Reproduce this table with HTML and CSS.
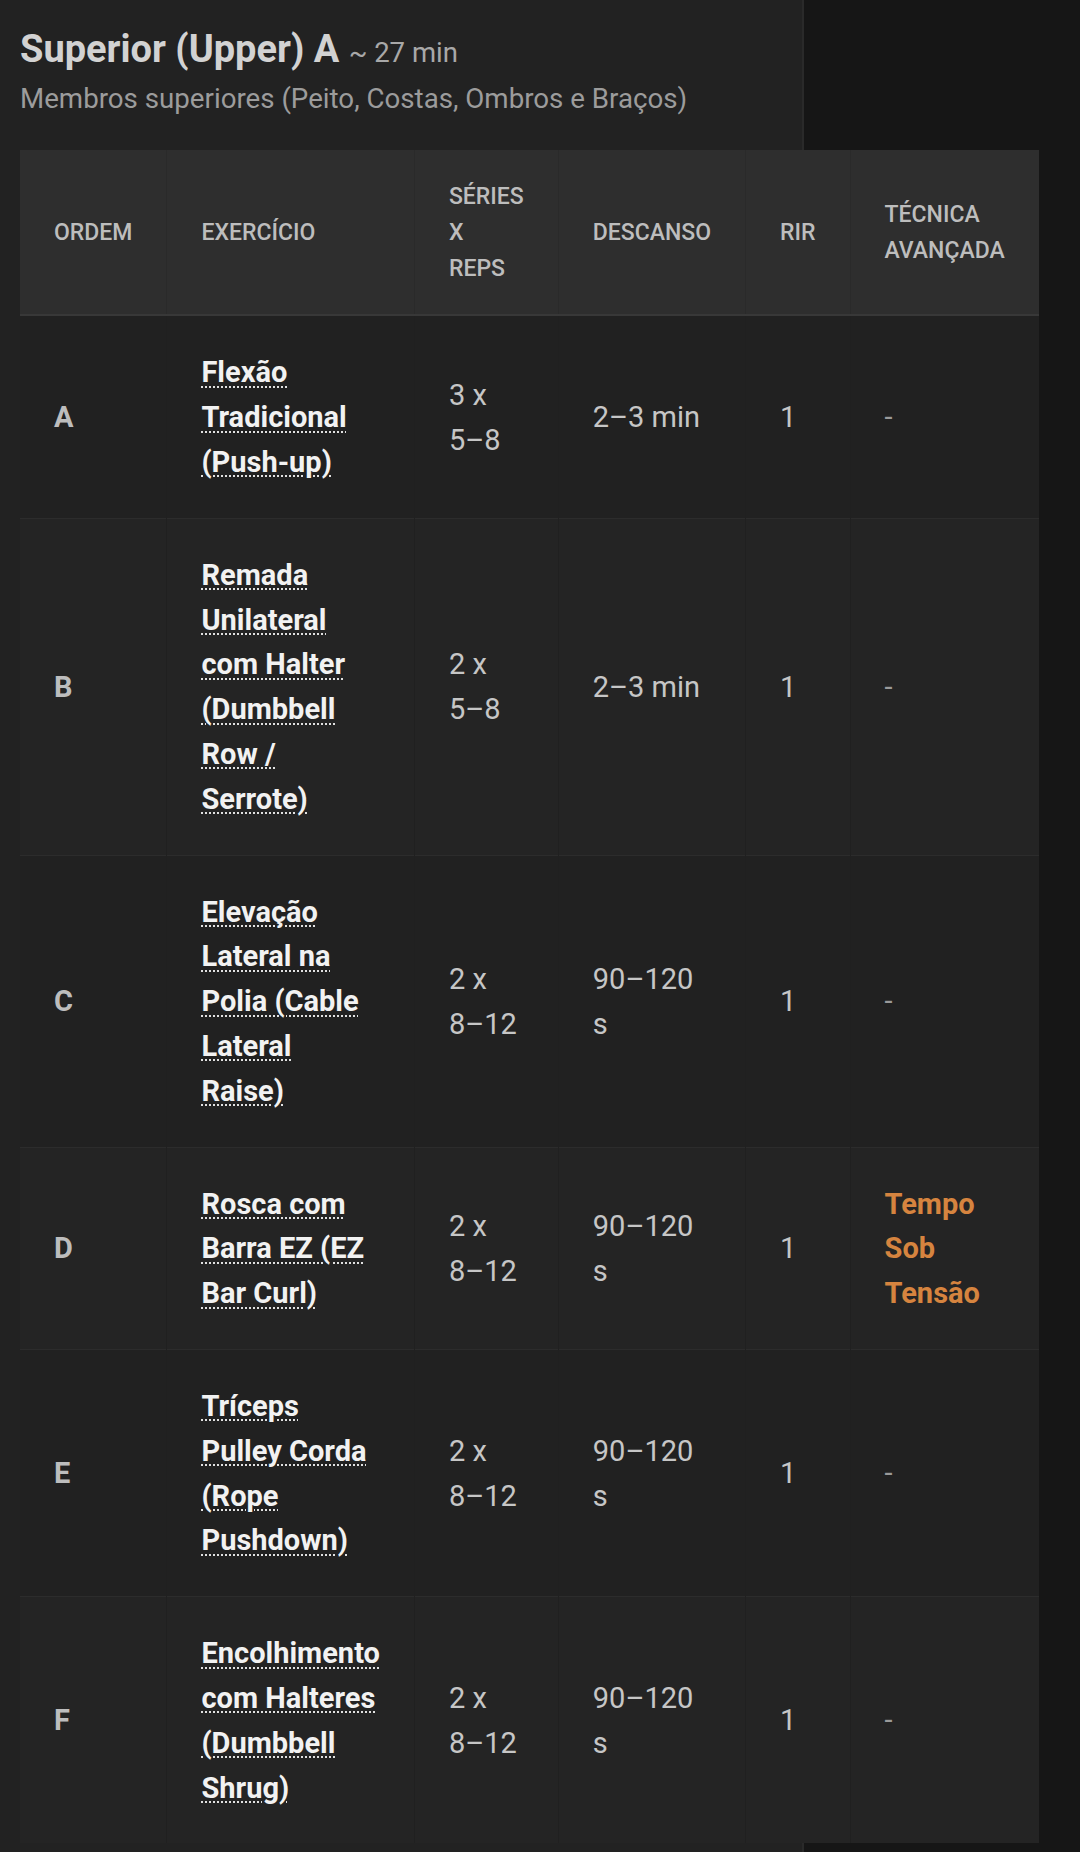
FILE: index.html
```html
<!DOCTYPE html>
<html lang="pt-BR">
<head>
<meta charset="utf-8">
<title>Superior (Upper) A</title>
<link rel="stylesheet" href="styles.css">
</head>
<body>
<div class="card">
  <h2 class="title">Superior (Upper) A <span class="dur">~ 27 min</span></h2>
  <p class="subtitle">Membros superiores (Peito, Costas, Ombros e Braços)</p>
  <div class="table-wrap">
    <table class="plan">
      <thead>
        <tr>
          <th>Ordem</th>
          <th>Exercício</th>
          <th>Séries x Reps</th>
          <th>Descanso</th>
          <th>RIR</th>
          <th>Técnica Avançada</th>
        </tr>
      </thead>
      <tbody>
        <tr>
          <td class="ord">A</td>
          <td class="ex"><abbr>Flexão Tradicional (Push-up)</abbr></td>
          <td>3 x 5–8</td>
          <td class="rest">2–3 min</td>
          <td>1</td>
          <td class="none">-</td>
        </tr>
        <tr>
          <td class="ord">B</td>
          <td class="ex"><abbr>Remada Unilateral com Halter (Dumbbell Row / Serrote)</abbr></td>
          <td>2 x 5–8</td>
          <td class="rest">2–3 min</td>
          <td>1</td>
          <td class="none">-</td>
        </tr>
        <tr>
          <td class="ord">C</td>
          <td class="ex"><abbr>Elevação Lateral na Polia (Cable Lateral Raise)</abbr></td>
          <td>2 x 8–12</td>
          <td class="rest">90–120 s</td>
          <td>1</td>
          <td class="none">-</td>
        </tr>
        <tr>
          <td class="ord">D</td>
          <td class="ex"><abbr>Rosca com Barra EZ (EZ Bar Curl)</abbr></td>
          <td>2 x 8–12</td>
          <td class="rest">90–120 s</td>
          <td>1</td>
          <td class="tech">Tempo Sob Tensão</td>
        </tr>
        <tr>
          <td class="ord">E</td>
          <td class="ex"><abbr>Tríceps Pulley Corda (Rope Pushdown)</abbr></td>
          <td>2 x 8–12</td>
          <td class="rest">90–120 s</td>
          <td>1</td>
          <td class="none">-</td>
        </tr>
        <tr>
          <td class="ord">F</td>
          <td class="ex"><abbr>Encolhimento com Halteres (Dumbbell Shrug)</abbr></td>
          <td>2 x 8–12</td>
          <td class="rest">90–120 s</td>
          <td>1</td>
          <td class="none">-</td>
        </tr>
      </tbody>
    </table>
  </div>
</div>
</body>
</html>
```

FILE: styles.css
```css
html, body {
  margin: 0;
  padding: 0;
  background: #161616;
  font-family: Roboto, "Noto Sans", Arial, sans-serif;
}

.card {
  width: 804px;
  min-height: 1852px;
  box-sizing: border-box;
  padding: 27px 0 0 20px;
  background: #222222;
  border-right: 2px solid #2a2a2a;
}

.title {
  margin: 0;
  font-size: 38px;
  line-height: normal;
  font-weight: 700;
  color: #d2d2d2;
}

.dur {
  font-size: 27.5px;
  font-weight: 400;
  color: #a8a8a8;
}

.subtitle {
  margin: 11px 0 0;
  font-size: 27.7px;
  line-height: normal;
  color: #9c9c9c;
}

.table-wrap {
  margin-top: 35px;
}

.plan {
  border-collapse: collapse;
  border-spacing: 0;
}

.plan th {
  background: #2e2e2e;
  color: #bdbdbd;
  font-size: 23px;
  line-height: 35.8px;
  font-weight: 500;
  text-transform: uppercase;
  text-align: left;
  padding: 29px 34px 28px 34px;
  border-right: 1px solid #2a2a2a;
  border-bottom: 2px solid #383838;
  vertical-align: middle;
}

.plan td {
  font-size: 29px;
  line-height: 44.8px;
  color: #c6c6c6;
  padding: 34px 34px 33px 34px;
  vertical-align: middle;
  border-right: 1px solid #202020;
  border-top: 1px solid #2c2c2c;
}

.plan tbody tr:first-child td {
  border-top: none;
}

.plan tbody tr:nth-child(odd) td {
  background: #212121;
}

.plan tbody tr:nth-child(even) td {
  background: #242424;
}

.plan th:last-child,
.plan td:last-child {
  border-right: none;
}

.plan td.ord {
  font-weight: 700;
  color: #bdbdbd;
}

.plan td.ex abbr {
  font-weight: 700;
  color: #f2f2f2;
  text-decoration: underline dotted #e0e0e0;
  text-decoration-thickness: 2px;
  text-underline-offset: 4px;
}

.plan td.none {
  color: #9a9a9a;
}

.plan td.tech {
  font-weight: 700;
  color: #d6843f;
}
```
